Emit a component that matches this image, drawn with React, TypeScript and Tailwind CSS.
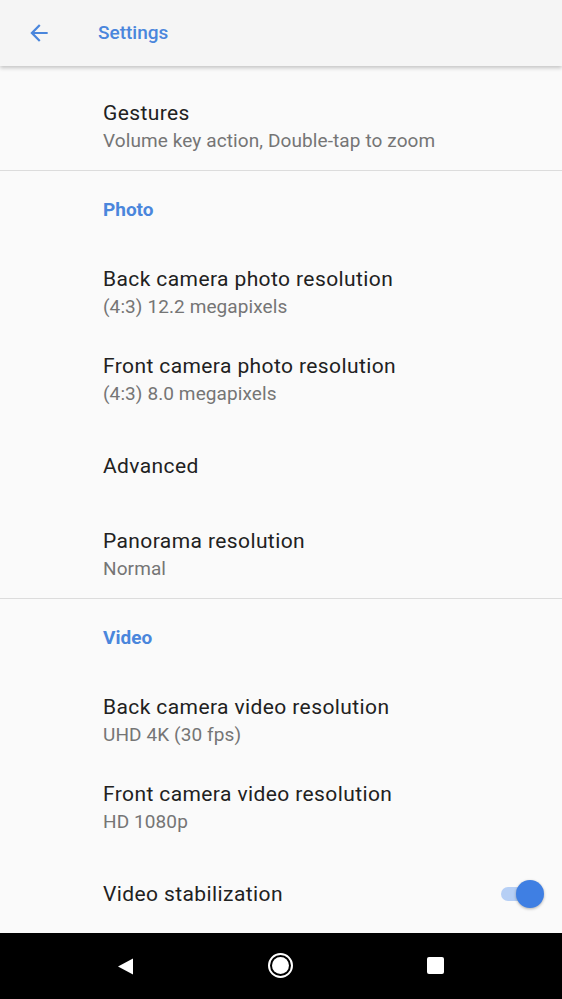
import React from "react";

const font = { fontFamily: "Roboto, 'Noto Sans', sans-serif" };

const titleCls = "text-[21px] leading-[28px] tracking-[0.4px] text-[#212121]";
const subCls = "text-[19px] leading-[28px] tracking-[0.1px] text-[#757575]";

function TwoLine({ title, sub, pt = "pt-[14px]", pb = "pb-[17px]" }: { title: string; sub: string; pt?: string; pb?: string }) {
  return (
    <div className={`pl-[103px] pr-4 ${pt} ${pb}`}>
      <div className={titleCls}>{title}</div>
      <div className={subCls}>{sub}</div>
    </div>
  );
}

function Header({ label }: { label: string }) {
  return (
    <div className="pl-[103px] pt-[25px] pb-[27px]">
      <div className="text-[19px] leading-[28px] font-bold text-[#4a86dc]">{label}</div>
    </div>
  );
}

export default function App() {
  return (
    <div style={font} className="w-[562px] h-[999px] bg-[#fafafa] flex flex-col overflow-hidden relative">
      <div className="h-[66px] shrink-0 bg-[#f5f5f5] flex items-center relative z-10 shadow-[0_2px_4px_rgba(0,0,0,0.22)]">
        <div className="w-[98px] flex items-center pl-[26px]">
          <svg width="26" height="26" viewBox="0 0 24 24">
            <path d="M20 11H7.83l5.59-5.59L12 4l-8 8 8 8 1.41-1.41L7.83 13H20v-2z" fill="#4a86dc" />
          </svg>
        </div>
        <div className="text-[19px] font-medium text-[#4a86dc]">Settings</div>
      </div>

      <div className="flex-1 flex flex-col">
        <TwoLine title="Gestures" sub="Volume key action, Double-tap to zoom" pt="pt-[33px]" pb="pb-[15px]" />
        <div className="h-px bg-[#dcdcdc]" />
        <Header label="Photo" />
        <TwoLine title="Back camera photo resolution" sub="(4:3) 12.2 megapixels" />
        <TwoLine title="Front camera photo resolution" sub="(4:3) 8.0 megapixels" />
        <div className="pl-[103px] pt-[27px] pb-[27px]">
          <div className={titleCls}>Advanced</div>
        </div>
        <TwoLine title="Panorama resolution" sub="Normal" pt="pt-[20px]" pb="pb-[15px]" />
        <div className="h-px bg-[#dcdcdc]" />
        <Header label="Video" />
        <TwoLine title="Back camera video resolution" sub="UHD 4K (30 fps)" />
        <TwoLine title="Front camera video resolution" sub="HD 1080p" />
        <div className="pl-[103px] pr-[18px] pt-[27px] flex items-center justify-between">
          <div className={titleCls}>Video stabilization</div>
          <div className="relative w-[44px] h-[28px] flex items-center">
            <div className="w-[34px] h-[14px] rounded-full bg-[#b6cff5] ml-[1px]" />
            <div className="absolute right-0 top-0 w-[28px] h-[28px] rounded-full bg-[#3f7fe3] shadow-[0_1px_3px_rgba(0,0,0,0.3)]" />
          </div>
        </div>
      </div>

      <div className="h-[66px] shrink-0 bg-black flex items-center">
        <div className="w-[562px] h-full relative">
          <svg className="absolute left-[117px] top-[25px]" width="16" height="17" viewBox="0 0 16 17">
            <path d="M16 0.5 L16 16.5 L1 8.5 Z" fill="#fff" strokeLinejoin="round" />
          </svg>
          <div className="absolute left-[268px] top-[20px] w-[25px] h-[25px] rounded-full border-2 border-white flex items-center justify-center">
            <div className="w-[17px] h-[17px] rounded-full bg-white" />
          </div>
          <div className="absolute left-[427px] top-[24px] w-[17px] h-[17px] bg-white rounded-[2px]" />
        </div>
      </div>
    </div>
  );
}
